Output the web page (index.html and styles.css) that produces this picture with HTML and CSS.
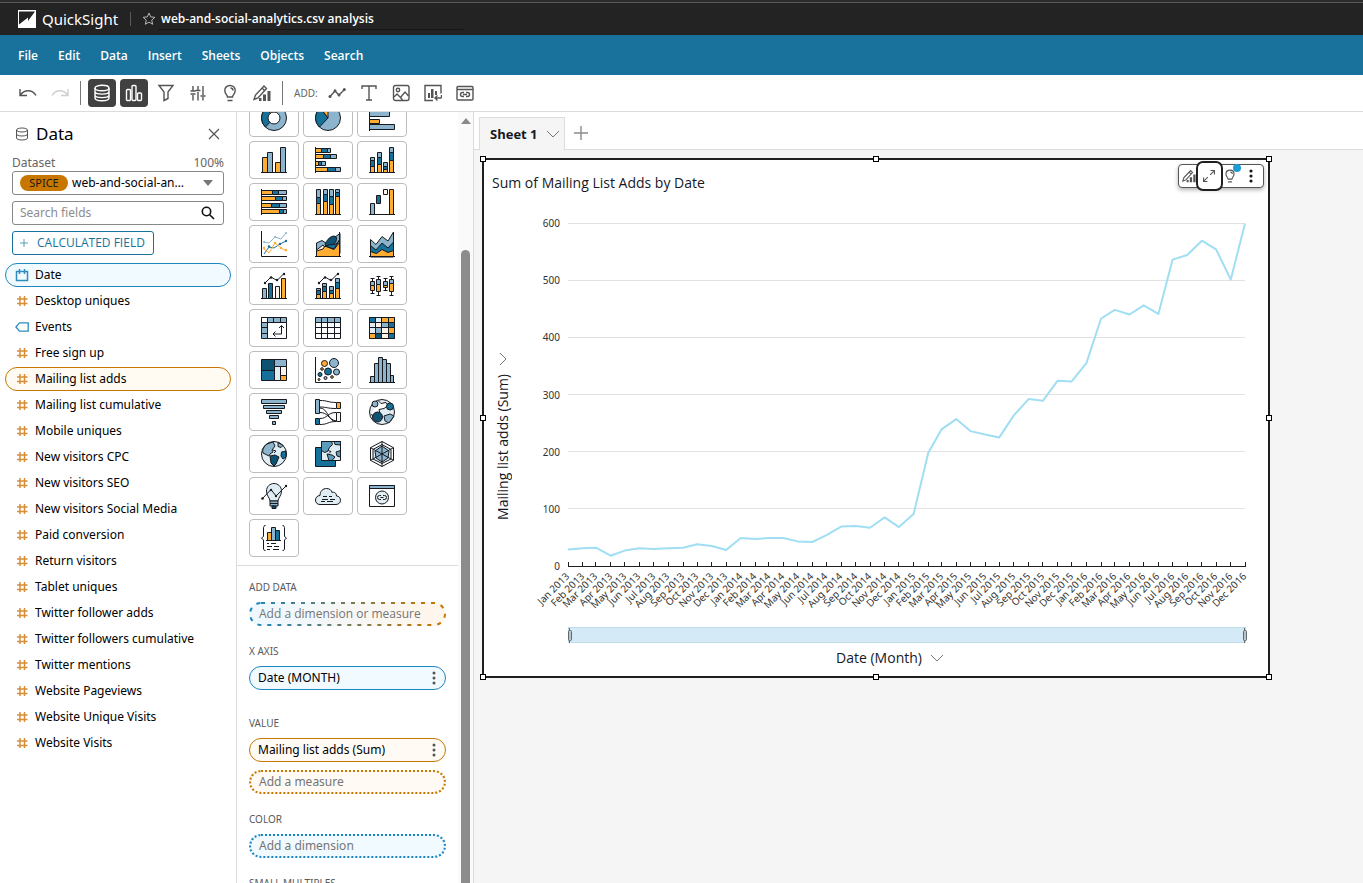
FILE: index.html
```html
<!DOCTYPE html>
<html lang="en">
<head>
<meta charset="utf-8">
<meta name="viewport" content="width=device-width, initial-scale=1">
<title>QuickSight</title>
<link rel="stylesheet" href="styles.css">
</head>
<body>
<header class="topbar">
  <svg class="logo" viewBox="0 0 18 18" aria-hidden="true"><rect width="18" height="18" fill="#fff"/><path d="M1 1.500h16L10 11V7.500L1 14.500z" fill="#232323"/></svg>
  <span class="brand">QuickSight</span>
  <span class="topbar-rule"></span>
  <button class="star" aria-label="Favorite"><svg viewBox="0 0 14 14"><path d="M7 1l1.700 3.900 4.200.4-3.200 2.800 1 4.200L7 10.100l-3.700 2.200 1-4.200L1.100 5.300l4.200-.4z"/></svg></button>
  <input class="analysis-name" type="text" aria-label="Analysis name" value="web-and-social-analytics.csv analysis">
</header>

<nav class="menubar">
  <button>File</button><button>Edit</button><button>Data</button><button>Insert</button><button>Sheets</button><button>Objects</button><button>Search</button>
</nav>

<div class="toolbar" role="toolbar" aria-label="Analysis tools">
  <button class="tool" aria-label="Undo"><svg viewBox="0 0 18 18"><path d="M1 5v6.500h7M1.500 11C5 5.500 13 5 17 11.500"/></svg></button>
  <button class="tool tool-off" aria-label="Redo"><svg viewBox="0 0 18 18"><path d="M17 5v6.500h-7M16.500 11C13 5.500 5 5 1 11.500"/></svg></button>
  <span class="tool-rule"></span>
  <button class="tool tool-on" aria-label="Data"><svg viewBox="0 0 18 18"><ellipse cx="9" cy="4" rx="7" ry="2.700"/><path d="M2 4v10c0 1.600 3 2.700 7 2.700s7-1.100 7-2.700V4M2 7.500c0 1.500 3 2.600 7 2.600s7-1.100 7-2.600M2 11c0 1.500 3 2.600 7 2.600s7-1.100 7-2.600"/></svg></button>
  <button class="tool tool-on" aria-label="Visuals"><svg viewBox="0 0 18 18"><rect x="1.500" y="5.500" width="4" height="11" rx="1"/><rect x="7" y="1.500" width="4" height="15" rx="1"/><rect x="12.500" y="9" width="4" height="7.500" rx="1"/></svg></button>
  <button class="tool" aria-label="Filter"><svg viewBox="0 0 18 18"><path d="M2 1.500h14l-5 6.500v6.500L7 16.500V8z"/></svg></button>
  <button class="tool" aria-label="Parameters"><svg viewBox="0 0 18 18"><path d="M4 2v5M4 11v5.500M9 2v4M9 8v8.500M14 2v9M14 13v3.500M1.500 10h5M1.500 7h5M6.500 6.500h5M11.500 12h5"/></svg></button>
  <button class="tool" aria-label="Insights"><svg viewBox="0 0 18 18"><path d="M6.500 13c0-2-2.700-3.200-2.700-6.500C3.800 3.500 6 1.500 9 1.500s5.200 2 5.200 5c0 3.300-2.700 4.500-2.700 6.500zM6.500 16.500h5M9.500 4c1.500 0 2.500 1 2.500 2.500"/></svg></button>
  <button class="tool" aria-label="Format visual"><svg viewBox="0 0 18 18"><path d="M1 15.500l1.500-4.500L11 2l2.500 2.500L5 14zM9 4l2.500 2.500"/><path class="solid" d="M6 14h2.500v3H6zM10 10.500h3V17h-3zM14.500 7h3v10h-3z"/></svg></button>
  <span class="tool-rule"></span>
  <span class="tool-label">ADD:</span>
  <button class="tool" aria-label="Add visual"><svg viewBox="0 0 18 18"><path d="M2 12.500l5-5.500 4 4 5.500-5.500"/><g class="solid"><circle cx="2" cy="12.500" r="1.500"/><circle cx="7" cy="6.800" r="1.500"/><circle cx="11" cy="11" r="1.500"/><circle cx="16.300" cy="5.500" r="1.500"/></g></svg></button>
  <button class="tool" aria-label="Add text"><svg viewBox="0 0 18 18"><path d="M2 5V2h14v3M9 2v14M6 16h6"/></svg></button>
  <button class="tool" aria-label="Add image"><svg viewBox="0 0 18 18"><rect x="1.500" y="1.500" width="15.500" height="15" rx="2"/><circle cx="6" cy="6" r="1.700"/><path d="M2 13l3-3 3.500 3.500L13 8l3.500 4M8.500 13.500l2 2.500"/></svg></button>
  <button class="tool" aria-label="Add from sheet"><svg viewBox="0 0 18 18"><path d="M9 16.500H1v-15h16v8"/><path class="solid" d="M4 9h2v5H4zM7 5h2.500v9H7zM11 7h2v4h-2z"/><path d="M11 14h6.500M13.500 11.500L11 14l2.500 2.500M17.500 11v3"/></svg></button>
  <button class="tool" aria-label="Add embed"><svg viewBox="0 0 18 18"><rect x="1" y="2.500" width="16" height="13.500" rx="1"/><path d="M1 5.500h16M8 8.500H6.500a2 2 0 000 4H8M10 8.500h1.500a2 2 0 010 4H10M7 10.500h4"/></svg></button>
</div>

<main class="workspace">
  <aside class="data-panel">
    <div class="panel-head">
      <svg class="head-icon" viewBox="0 0 14 14" aria-hidden="true"><ellipse cx="7" cy="3" rx="5.500" ry="2"/><path d="M1.500 3v8c0 1.200 2.400 2 5.500 2s5.500-.8 5.500-2V3M1.500 7c0 1.200 2.400 2 5.500 2s5.500-.8 5.500-2"/></svg>
      <h2>Data</h2>
      <button class="close" aria-label="Close data panel"><svg viewBox="0 0 12 12"><path d="M1 1l10 10M11 1L1 11"/></svg></button>
    </div>
    <div class="dataset-row"><label for="dataset">Dataset</label><span>100%</span></div>
    <div class="box dataset-box">
      <span class="spice">SPICE</span>
      <select id="dataset"><option>web-and-social-analytics.csv</option></select>
      <svg class="caret" viewBox="0 0 10 6" aria-hidden="true"><path d="M0 0h10L5 6z"/></svg>
    </div>
    <div class="box search-box">
      <input type="text" placeholder="Search fields" aria-label="Search fields">
      <svg class="search-icon" viewBox="0 0 14 14" aria-hidden="true"><circle cx="5.500" cy="5.500" r="4.200"/><path d="M8.700 8.700l4.300 4.300"/></svg>
    </div>
    <button class="calc"><svg viewBox="0 0 10 10" aria-hidden="true"><path d="M5 1v8M1 5h8"/></svg>CALCULATED FIELD</button>
    <svg width="0" height="0" class="defs" aria-hidden="true">
      <symbol id="hash" viewBox="0 0 14 14"><path d="M5 2v10M9.500 2v10M2 5h10.500M2 9.500h10.500" fill="none" stroke="#d78e38" stroke-width="1.500"/></symbol>
    </svg>
    <ul class="fields">
      <li class="field field-dim"><svg viewBox="0 0 14 14"><path d="M1.500 3.500h11v9h-11zM4.500 1v5M9.500 1v5" fill="none" stroke="#2e8bc0" stroke-width="1.500"/></svg>Date</li>
      <li class="field"><svg><use href="#hash"/></svg>Desktop uniques</li>
      <li class="field"><svg viewBox="0 0 14 14"><path d="M4.500 2.800h8.700v8.400H4.500L.9 7z" fill="none" stroke="#2e8bc0" stroke-width="1.300"/></svg>Events</li>
      <li class="field"><svg><use href="#hash"/></svg>Free sign up</li>
      <li class="field field-measure"><svg><use href="#hash"/></svg>Mailing list adds</li>
      <li class="field"><svg><use href="#hash"/></svg>Mailing list cumulative</li>
      <li class="field"><svg><use href="#hash"/></svg>Mobile uniques</li>
      <li class="field"><svg><use href="#hash"/></svg>New visitors CPC</li>
      <li class="field"><svg><use href="#hash"/></svg>New visitors SEO</li>
      <li class="field"><svg><use href="#hash"/></svg>New visitors Social Media</li>
      <li class="field"><svg><use href="#hash"/></svg>Paid conversion</li>
      <li class="field"><svg><use href="#hash"/></svg>Return visitors</li>
      <li class="field"><svg><use href="#hash"/></svg>Tablet uniques</li>
      <li class="field"><svg><use href="#hash"/></svg>Twitter follower adds</li>
      <li class="field"><svg><use href="#hash"/></svg>Twitter followers cumulative</li>
      <li class="field"><svg><use href="#hash"/></svg>Twitter mentions</li>
      <li class="field"><svg><use href="#hash"/></svg>Website Pageviews</li>
      <li class="field"><svg><use href="#hash"/></svg>Website Unique Visits</li>
      <li class="field"><svg><use href="#hash"/></svg>Website Visits</li>
    </ul>
  </aside>

  <aside class="visual-panel">
    <div class="visual-scroll">
      <div class="types">
        <button aria-label="Donut chart"><svg viewBox="0 0 26 26"><circle class="l" cx="13" cy="13" r="12.500"/><path class="d" d="M13 13L4.500 22A12.500 12.500 0 015.500 3z"/><path class="o" d="M13 13L5.500 3A12.500 12.500 0 0113 .5z"/><circle class="w" cx="13" cy="13" r="6"/></svg></button>
        <button aria-label="Pie chart"><svg viewBox="0 0 26 26"><circle class="l" cx="13" cy="13" r="12.500"/><path class="d" d="M13 13L4.500 22A12.500 12.500 0 015.500 3z"/><path class="o" d="M13 13L5.500 3A12.500 12.500 0 0113 .5z"/></svg></button>
        <button aria-label="Bar chart"><svg viewBox="0 0 26 26"><path class="l" d="M.5 6.500h20v5H.5zM.5 19.500h25v5H.5z"/><path class="o" d="M.5 1.500h14v4H.5zM.5 14.500h10v4H.5z"/><path class="n0" d="M.5 0v26"/></svg></button>

        <button aria-label="Vertical bar chart"><svg viewBox="0 0 26 26"><path class="o" d="M1.500 10.500h5v15h-5zM14.500 15.500h5v10h-5z"/><path class="l" d="M6.500 5.500h5v20h-5zM19.500.5h5v25h-5z"/><path class="n0" d="M0 25.500h26"/></svg></button>
        <button aria-label="Stacked bar chart"><svg viewBox="0 0 26 26"><path class="o" d="M.5 1.500h6v4h-6zM.5 7.500h8v4h-8zM.5 14.500h3v4h-3zM.5 20.500h12v4H.5z"/><path class="d" d="M6.500 1.500h6v4h-6zM8.500 7.500h7v4h-7zM3.500 14.500h3v4h-3zM12.500 20.500h8v4h-8z"/><path class="l" d="M12.500 1.500h3v4h-3zM15.500 7.500h6v4h-6zM6.500 14.500h4v4h-4zM20.500 20.500h5v4h-5z"/><path class="n0" d="M.5 0v26"/></svg></button>
        <button aria-label="Vertical stacked bar chart"><svg viewBox="0 0 26 26"><path class="o" d="M1.500 19.500h4v6h-4zM8.500 17.500h4v8h-4zM14.500 22.500h4v3h-4zM20.500 13.500h4v12h-4z"/><path class="d" d="M1.500 13.500h4v6h-4zM8.500 10.500h4v7h-4zM14.500 19.500h4v3h-4zM20.500 5.500h4v8h-4z"/><path class="l" d="M1.500 10.500h4v3h-4zM8.500 5.500h4v5h-4zM14.500 15.500h4v4h-4zM20.500.5h4v5h-4z"/><path class="n0" d="M0 25.500h26"/></svg></button>

        <button aria-label="Stacked 100% bar chart"><svg viewBox="0 0 26 26"><path class="o" d="M.5 1.500h11v4H.5zM.5 7.500h14v4H.5zM.5 14.500h10v4H.5zM.5 20.500h18v4H.5z"/><path class="d" d="M11.500 1.500h6v4h-6zM14.500 7.500h7v4h-7zM10.500 14.500h8v4h-8zM18.500 20.500h4v4h-4z"/><path class="l" d="M17.500 1.500h8v4h-8zM21.500 7.500h4v4h-4zM18.500 14.500h7v4h-7zM22.500 20.500h3v4h-3z"/><path class="n0" d="M.5 0v26"/></svg></button>
        <button aria-label="Vertical stacked 100% bar chart"><svg viewBox="0 0 26 26"><path class="o" d="M1.500 14.500h4v11h-4zM8.500 12.500h4v13h-4zM14.500 15.500h4v10h-4zM20.500 7.500h4v18h-4z"/><path class="d" d="M1.500 8.500h4v6h-4zM8.500 5.500h4v7h-4zM14.500 7.500h4v8h-4zM20.500 3.500h4v4h-4z"/><path class="l" d="M1.500.5h4v8h-4zM8.500.5h4v5h-4zM14.500.5h4v7h-4zM20.500.5h4v3h-4z"/><path class="n0" d="M0 25.500h26"/></svg></button>
        <button aria-label="Waterfall chart"><svg viewBox="0 0 26 26"><path class="l" d="M1.500 14.500h4v11h-4z"/><path class="d" d="M7.500 6.500h4v8h-4z"/><path class="p" d="M14.500.5h4v5h-4z"/><path class="o" d="M20.500.5h4v25h-4z"/><path class="n0" d="M0 25.500h26"/></svg></button>

        <button aria-label="Line chart"><svg viewBox="0 0 26 26"><path class="n0" d="M.5 0v25.500H26"/><path class="ln lnl" d="M3 11l5 1 6-6 6 2 5-6"/><path class="ln lnd" d="M3 23l5-7 5 1 6-4 6-3"/><path class="ln lno" d="M3 18l5 4 6-10 6 5 5 3"/><g fill="#8cb4cc"><circle cx="3" cy="11" r="1"/><circle cx="14" cy="6" r="1"/><circle cx="25" cy="2" r="1"/></g><g fill="#16719a"><circle cx="8" cy="15.500" r="1.200"/><circle cx="25" cy="10" r="1.200"/><circle cx="19" cy="13" r="1.200"/></g><g fill="#ffac33"><circle cx="14" cy="12" r="1.300"/><circle cx="25" cy="19" r="1.200"/><circle cx="3" cy="17" r="1.200"/><circle cx="20" cy="17" r="1.200"/></g></svg></button>
        <button aria-label="Area line chart"><svg viewBox="0 0 26 26"><path class="l" d="M1.500 12L7 9.500l6 4 5-6 7-5v20L1.500 24z"/><path class="p" d="M1.500 19L8 14l3 4-3 7H1.500z"/><path class="n" d="M10 13c4-8 9-9 11-7s-1 9-9 12z"/><path class="o" d="M1.500 20L8 18l2-3 9 3.500 5.500-7v14h-23z"/><path class="d" d="M10 15l4-1 7-1 3.500-4-5.500 9z"/><path class="n0" d="M0 25.500h26M24.500 1v24"/></svg></button>
        <button aria-label="Stacked area line chart"><svg viewBox="0 0 26 26"><path class="l" d="M1.500 8.500L7 13.500l6-8 6 4.500 5.500-9v25h-23z"/><path class="d" d="M1.500 14.500L7 19l6-7 6 5 5.500-6v14.500h-23z"/><path class="o" d="M1.500 20.500l6 2 5.500-4 6 3 5.500-2v6h-23z"/><path class="n0" d="M0 25.500h26"/></svg></button>

        <button aria-label="Clustered bar combo chart"><svg viewBox="0 0 26 26"><path class="l" d="M1.500 15.500h4v10h-4z"/><path class="d" d="M7.500 10.500h4v15h-4z"/><path class="p" d="M14.500 13.500h4v12h-4z"/><path class="o" d="M20.500 5.500h4v20h-4z"/><path class="n0" d="M0 25.500h26M4 10l6-6 6 3.500L23 .5"/><g fill="#16191f"><circle cx="4" cy="10" r="1.200"/><circle cx="10" cy="4.500" r="1.200"/><circle cx="16" cy="7" r="1.200"/><circle cx="23" cy="1" r="1.200"/></g></svg></button>
        <button aria-label="Stacked bar combo chart"><svg viewBox="0 0 26 26"><path class="o" d="M1.500 21.500h4v4h-4zM7.500 18.500h4v7h-4zM14.500 20.500h4v5h-4zM20.500 15.500h4v10h-4z"/><path class="d" d="M1.500 17.500h4v4h-4zM7.500 13.500h4v5h-4zM14.500 17.500h4v3h-4zM20.500 9.500h4v6h-4z"/><path class="l" d="M1.500 15.500h4v2h-4zM7.500 10.500h4v3h-4zM14.500 13.500h4v4h-4zM20.500 5.500h4v4h-4z"/><path class="n0" d="M0 25.500h26M4 10l6-6 6 3.500L23 .5"/><g fill="#16191f"><circle cx="4" cy="10" r="1.200"/><circle cx="10" cy="4.500" r="1.200"/><circle cx="16" cy="7" r="1.200"/><circle cx="23" cy="1" r="1.200"/></g></svg></button>
        <button aria-label="Box plot"><svg viewBox="0 0 26 26"><path class="n0" d="M3.500 5v15M9.500 4v18M16.500 5v13M22.500 3v19M1.500 5.500h4M1.500 20.500h4M7.500 3.500h4M7.500 22.500h4M14.500 5.500h4M14.500 17.500h4M20.500 3.500h4M20.500 22.500h4"/><path class="o" d="M1.500 12.500h4v5h-4zM7.500 11.500h4v7h-4zM14.500 12.500h4v2h-4zM20.500 10.500h4v8h-4z"/><path class="l" d="M1.500 8.500h4v4h-4zM7.500 6.500h4v5h-4zM14.500 8.500h4v4h-4zM20.500 6.500h4v4h-4z"/></svg></button>

        <button aria-label="Pivot table"><svg viewBox="0 0 26 26"><path class="l" d="M.5 2.500h25v5H6.500v16h-6z"/><path class="w" d="M.5 2.500h6v5h-6zM6.500 7.500h19v16h-19z"/><path class="n0" d="M.5 12.500h6M.5 18.500h6M12.500 2.500v5M19.500 2.500v5M20.500 11v8h-8.500M18 13l2.500-2.500L23 13M14.500 16.500L12 19l2.500 2.500"/></svg></button>
        <button aria-label="Table"><svg viewBox="0 0 26 26"><path class="w" d="M.5 2.500h25v21H.5z"/><path class="l" d="M.5 2.500h25v5H.5z"/><path class="n0" d="M.5 12.500h25M.5 18.500h25M6.500 2.500v21M12.500 2.500v21M19.500 2.500v21"/></svg></button>
        <button aria-label="Heat map"><svg viewBox="0 0 26 26"><path class="e" d="M.5 2.500h25v21H.5z"/><path class="d" d="M.5 2.500h6v5h-6zM19.500 7.500h6v5h-6zM19.500 18.500h6v5h-6z"/><path class="o" d="M12.500 2.500h13v5h-13zM19.500 12.500h6v6h-6zM.5 18.500h6v5h-6z"/><path class="l" d="M12.500 7.500h7v5h-7zM6.500 12.500h6v6h-6z"/><path class="n" d="M6.500 18.500h6v5h-6z"/><path class="p" d="M6.500 7.500h6v5h-6zM12.500 12.500h7v11h-7z"/><path class="n0" d="M.5 12.500h25M.5 18.500h25M.5 7.500h25M6.500 2.500v21M12.500 2.500v21M19.500 2.500v21"/></svg></button>

        <button aria-label="Tree map"><svg viewBox="0 0 26 26"><path class="n" d="M.5 2.500h13v11H.5z"/><path class="d" d="M.5 13.500h13v10H.5z"/><path class="l" d="M13.500 2.500h12v7h-12z"/><path class="e" d="M13.500 9.500h6v14h-6z"/><path class="p" d="M19.500 9.500h6v9h-6z"/><path class="o" d="M19.500 18.500h6v5h-6z"/></svg></button>
        <button aria-label="Scatter plot"><svg viewBox="0 0 26 26"><path class="n0" d="M.5 0v25.500H26"/><circle class="o" cx="9.500" cy="6.500" r="3"/><circle class="l" cx="19" cy="6" r="4.500"/><circle class="d" cx="13" cy="14.500" r="3.500"/><circle class="l" cx="21.500" cy="15" r="3"/><circle class="d" cx="5" cy="17.500" r="2"/><circle class="l" cx="10.500" cy="21" r="1.500"/><circle class="o" cx="17" cy="20" r="1.300"/><circle class="o" cx="7" cy="12" r="1.300"/><circle class="o" cx="4" cy="22.500" r="1"/></svg></button>
        <button aria-label="Histogram"><svg viewBox="0 0 26 26"><path class="l" d="M1.500 19.500h4v6h-4zM5.500 6.500h4v19h-4zM9.500.5h4v25h-4zM13.500 2.500h4v23h-4zM17.500 6.500h4v19h-4zM21.500 18.500h3v7h-3z"/><path class="n0" d="M0 25.500h26"/></svg></button>

        <button aria-label="Funnel chart"><svg viewBox="0 0 26 26"><path class="l" d="M.5.5h25v4H.5zM2.500 6.500h21v3h-21zM5.500 11.500h15v3h-15zM8.500 16.500h9v3h-9zM11.500 22.500h3v3h-3z"/></svg></button>
        <button aria-label="Sankey diagram"><svg viewBox="0 0 26 26"><path class="n0" d="M5 1.500C13 1.500 13 3.500 21 3.500M5 8C12 8 12 9.500 21 9.500M5 9C13 9 13 22.500 21 22.500M5 13.500C13 13.500 13 20 21 22M5 19.500C13 19.500 12 13.500 21 13.500M5 25.500C13 25.500 13 22.500 21 22.500"/><path class="l" d="M.5.5h4v14h-4z"/><path class="o" d="M21.500 3.500h4v6h-4z"/><path class="p" d="M21.500 13.500h4v9h-4z"/><path class="d" d="M.5 19.500h4v6h-4z"/></svg></button>
        <button aria-label="Points on map"><svg viewBox="0 0 26 26"><circle class="e" cx="13" cy="13" r="12.500"/><path class="w" d="M9 1.500l3 3 5-1 2 3-4 3-5 1 1 4-5 3-4-2"/><path class="l" d="M15 17l6-2 4 2-5 7-4-2z"/><circle class="l" cx="6" cy="5" r="3"/><circle class="d" cx="21" cy="7.500" r="3.500"/><circle class="n" cx="8.500" cy="18" r="5"/></svg></button>

        <button aria-label="Filled globe map"><svg viewBox="0 0 26 26"><circle class="e" cx="13" cy="13" r="12.500"/><path class="l" d="M6 3l6-2 2 4-3 4 1 2-3 2-1 2-6-3C1 9 3 5 6 3z"/><path class="l" d="M17 1.500l5 3-2 2-3-1z"/><path class="n" d="M9 15l5-1 4 2-3 7-2 2-3-3z"/><path class="d" d="M20.500 11l4.500-1v6l-3 2-2-3z"/><path class="n0" d="M12 9l3 1-2 2"/></svg></button>
        <button aria-label="Layer map"><svg viewBox="0 0 26 26"><path class="d" d="M.5 6.500h20v19H.5z"/><path class="e" d="M6.500.5h19v19h-19z"/><path class="dl" d="M6.500.5h10l1 3-3 3-2 4-3 1-3-2zM19 .5h6.500V4L20 3.500zM25.500 9.500L21 11l1 4 3.500 1z"/><path class="dl" d="M12 13l5 1 3 2-3 3.500h-3z"/><path class="n0" d="M13 9.500l3 1-2 2"/></svg></button>
        <button aria-label="Radar chart"><svg viewBox="0 0 26 26"><path class="w" d="M13 .5l11.500 6.200v12.600L13 25.500 1.500 19.300V6.700z"/><path class="e" d="M13 3.500l9 5v9.500l-9 4.500L4 18V8.500z"/><path class="l" d="M13 5l7 5-1 7-6 4-6-4-1-7z"/><path class="n0" d="M13 .5v25M1.500 6.700l23 12.600M24.500 6.700L1.500 19.300"/></svg></button>

        <button aria-label="Insight"><svg viewBox="0 0 26 26"><path class="e" d="M9 18c0-3-3.500-5-3.500-10C5.500 3.500 9 .5 13 .5S20.500 3.500 20.500 8c0 5-3.500 7-3.500 10z"/><path class="l" d="M9 18h8v5H9z"/><path class="n" d="M11 23h4v2.500h-4z"/><path class="n0" d="M9 20.500h8M1.500 15.500l8.500-9 5 6.500L25 3"/><g fill="#16191f"><circle cx="1.500" cy="15.500" r="1.300"/><circle cx="10" cy="7" r="1.200"/><circle cx="15" cy="13" r="1.200"/><circle cx="25" cy="3" r="1.200"/></g></svg></button>
        <button aria-label="Word cloud"><svg viewBox="0 0 26 26"><path class="e" d="M5 21.500C2 21.500.5 19.500.5 17S2.500 12.500 5 12.500C5 8 8 5.500 11.500 5.500c3 0 5 1.500 5.500 4 2-1 4.500.5 4.500 3.500 2.500 0 4 2 4 4.300 0 2.500-2 4.200-4.500 4.200z"/><path class="n0" d="M8 13.500h4M14 13.500h3M7 16.500h6M15 16.500h5M6 18.500h4M12 18.500h6"/></svg></button>
        <button aria-label="Custom visual content"><svg viewBox="0 0 26 26"><path class="w" d="M.5 2.500h25v21H.5z"/><path class="l" d="M.5 2.500h25v3H.5z"/><circle class="e" cx="13" cy="14.500" r="6.500"/><path class="n0" d="M12 12.500h-1.500a2 2 0 000 4H12M14 12.500h1.500a2 2 0 010 4H14M11.500 14.500h3"/></svg></button>

        <button aria-label="Highcharts visual"><svg viewBox="0 0 26 26"><path class="o" d="M6.500 7.500h4v8h-4z"/><path class="l" d="M10.500 2.500h4v13h-4z"/><path class="d" d="M14.500 5.500h4v10h-4z"/><path class="n0" d="M4.500.5h-1l-1 2v9L.5 13l2 2v9l1 1.500h1M21.500.5h1l1 2v9l2 1.500-2 2v9l-1 1.500h-1M5 15.500h15M6 18.500h2M10 18.500h5M6 21.500h5M13 21.500h5M6 24.500h3M12 24.500h6"/></svg></button>
      </div>
      <div class="wells">
        <section class="well">
          <h3>ADD DATA</h3>
          <button class="drop drop-any">
            <svg aria-hidden="true"><defs><linearGradient id="mix"><stop offset="0" stop-color="#1a86c4"/><stop offset=".2" stop-color="#3d8199"/><stop offset=".8" stop-color="#a9771f"/><stop offset="1" stop-color="#c97700"/></linearGradient></defs><rect class="drop-line"/></svg>Add a dimension or measure</button>
        </section>
        <section class="well">
          <h3>X AXIS</h3>
          <div class="pill pill-dim">Date (MONTH)<button class="dots" aria-label="Date menu"><svg viewBox="0 0 4 14"><circle cx="2" cy="2" r="1.500"/><circle cx="2" cy="7" r="1.500"/><circle cx="2" cy="12" r="1.500"/></svg></button></div>
        </section>
        <section class="well">
          <h3>VALUE</h3>
          <div class="pill pill-measure">Mailing list adds (Sum)<button class="dots" aria-label="Mailing list adds menu"><svg viewBox="0 0 4 14"><circle cx="2" cy="2" r="1.500"/><circle cx="2" cy="7" r="1.500"/><circle cx="2" cy="12" r="1.500"/></svg></button></div>
          <button class="drop drop-measure">Add a measure</button>
        </section>
        <section class="well">
          <h3>COLOR</h3>
          <button class="drop drop-dim">Add a dimension</button>
        </section>
        <section class="well">
          <h3>SMALL MULTIPLES</h3>
          <button class="drop drop-dim">Add a dimension</button>
        </section>
      </div>
    </div>
    <div class="scrollbar" aria-hidden="true"><svg viewBox="0 0 10 6"><path d="M0 6l5-6 5 6z"/></svg><span class="thumb"></span></div>
  </aside>

  <section class="stage">
    <div class="tabs">
      <button class="tab">Sheet 1<svg viewBox="0 0 14 8" aria-hidden="true"><path d="M1 1l6 6 6-6"/></svg></button>
      <button class="add-tab" aria-label="Add sheet"><svg viewBox="0 0 14 14"><path d="M7 0v14M0 7h14"/></svg></button>
    </div>
    <div class="canvas">
      <article class="visual">
        <h2>Sum of Mailing List Adds by Date</h2>
        <div class="visual-body">
          <button class="axis-y"><span>Mailing list adds (Sum)</span><svg viewBox="0 0 8 14" aria-hidden="true"><path d="M1 1l6 6-6 6"/></svg></button>
          <svg id="chart" class="chart" viewBox="0 0 744 440" role="img" aria-label="Line chart of mailing list adds by month"></svg>
        </div>
        <button class="axis-x">Date (Month)<svg viewBox="0 0 14 8" aria-hidden="true"><path d="M1 1l6 6 6-6"/></svg></button>
        <div class="visual-tools">
          <button aria-label="Format visual"><svg viewBox="0 0 18 18"><path d="M1 15.500l1.500-4.500L11 2l2.500 2.500L5 14zM9 4l2.500 2.500"/><path class="solid" d="M6 14h2.500v3H6zM10 10.500h3V17h-3zM14.500 7h3v10h-3z"/></svg></button>
          <button class="focused" aria-label="Maximize"><svg viewBox="0 0 18 18"><path d="M10.500 7.500L16 2M11 2h5v5M7.500 10.500L2 16M2 11v5h5"/></svg></button>
          <button class="has-dot" aria-label="Insights"><svg viewBox="0 0 18 18"><path d="M6.500 13c0-2-2.700-3.200-2.700-6.500C3.800 3.500 6 1.500 9 1.500s5.200 2 5.200 5c0 3.300-2.700 4.500-2.700 6.500zM6.500 16.500h5M9.500 4c1.500 0 2.500 1 2.500 2.500"/></svg></button>
          <button class="more" aria-label="Menu options"><svg viewBox="0 0 4 14"><circle cx="2" cy="2" r="1.600"/><circle cx="2" cy="7" r="1.600"/><circle cx="2" cy="12" r="1.600"/></svg></button>
        </div>
        <i class="grip top left"></i><i class="grip top mid"></i><i class="grip top right"></i>
        <i class="grip center left"></i><i class="grip center right"></i>
        <i class="grip bottom left"></i><i class="grip bottom mid"></i><i class="grip bottom right"></i>
      </article>
    </div>
  </section>
</main>
<script src="app.js"></script>
</body>
</html>
```
FILE: styles.css
```css
* { box-sizing: border-box; }
html, body { height: 100%; }
body {
  margin: 0;
  display: flex;
  flex-direction: column;
  overflow: hidden;
  font: 12px/16px "Noto Sans", "Open Sans", sans-serif;
  color: #000;
  background: #fff;
}
button, input, select { font: inherit; color: inherit; }
button { margin: 0; padding: 0; border: 0; background: none; cursor: pointer; }
h2, h3, ul { margin: 0; padding: 0; font-weight: 400; list-style: none; }
svg { display: block; flex: none; }

/* Top bar */
.topbar {
  flex: none;
  display: flex;
  align-items: center;
  height: 35px;
  padding: 0 18px;
  background: #232323;
  border-top: 2px solid #2b2b2b;
  box-shadow: inset 0 1px #585858;
  color: #fff;
}
.logo { width: 18px; height: 18px; }
.brand { margin-left: 6px; font-size: 15px; line-height: 20px; }
.topbar-rule { width: 1px; height: 14px; margin: 0 11px 0 12px; background: #5a5a5a; }
.star svg { width: 14px; height: 14px; fill: none; stroke: #b5b5b5; }
.analysis-name {
  flex: 0 1 304px;
  min-width: 0;
  height: 22px;
  margin-left: 3px;
  padding: 0 2px;
  border: 0;
  border-bottom: 1px solid #161616;
  background: none;
  font-family: "Open Sans", sans-serif;
  font-weight: 600;
}

/* Menu bar */
.menubar {
  flex: none;
  display: flex;
  align-items: center;
  gap: 20px;
  height: 40px;
  padding: 2px 18px 0;
  background: #19729b;
  color: #fff;
  font-family: "Open Sans", sans-serif;
  font-weight: 600;
}

/* Toolbar */
.toolbar {
  flex: none;
  display: flex;
  align-items: center;
  gap: 4px;
  height: 37px;
  padding: 0 14px;
  border-bottom: 1px solid #dcdcdc;
}
.tool { display: grid; place-items: center; width: 28px; height: 28px; border-radius: 4px; color: #545454; }
.tool svg, .visual-tools svg { width: 18px; height: 18px; fill: none; stroke: currentColor; stroke-width: 1.4; }
.tool .solid, .visual-tools .solid { fill: currentColor; stroke: none; }
.tool-off { color: #cfcfcf; }
.tool-on { background: #414141; color: #fff; }
.tool-rule { width: 2px; height: 24px; margin: 0 2px; border-left: 1px solid #777; }
.tool-label { width: 29px; padding-left: 4px; font-size: 10px; color: #666; }

.workspace { flex: 1; display: flex; min-height: 0; }

/* Data panel */
.data-panel { flex: none; width: 237px; padding: 10px 5px; border-right: 1px solid #dcdcdc; overflow: hidden; }
.panel-head { display: flex; align-items: center; height: 24px; margin: 0 10px 9px; }
.panel-head h2 { flex: 1; margin-left: 7px; font-size: 17px; line-height: 24px; }
.head-icon { width: 14px; height: 14px; fill: none; stroke: #555; }
.close svg { width: 12px; height: 12px; stroke: #545454; stroke-width: 1.2; }
.close { margin-right: 1px; }
.dataset-row { display: flex; justify-content: space-between; margin: 0 7px; color: #666; }
.box { display: flex; align-items: center; height: 24px; margin: 0 7px 6px; padding: 0 8px 0 7px; border: 1px solid #888; border-radius: 3px; }
.spice { width: 48px; border-radius: 8px; background: #c77700; color: #1a1a1a; font-size: 11px; text-align: center; }
.box select { flex: 1; min-width: 0; margin: 0 16px 0 4px; padding: 0; border: 0; background: none; appearance: none; overflow: hidden; text-overflow: ellipsis; white-space: nowrap; }
.caret { width: 10px; height: 6px; margin-right: 2px; fill: #777; }
.box input { flex: 1; min-width: 0; padding: 0; border: 0; outline: 0; background: none; }
.box input::placeholder { color: #8c8c8c; opacity: 1; }
.search-icon { width: 14px; height: 14px; fill: none; stroke: #111; stroke-width: 1.6; }
.calc { display: flex; align-items: center; gap: 8px; height: 24px; margin: 0 7px 8px; padding: 0 8px 0 6px; border: 1px solid #19729b; border-radius: 3px; color: #19729b; font: 12px/16px "Open Sans", sans-serif; }
.calc svg { width: 10px; height: 10px; stroke: #5c9cba; }
.defs { position: absolute; }
.field { display: flex; align-items: center; gap: 6px; height: 24px; margin: 0 0 2px; padding: 0 9px; border: 1px solid transparent; border-radius: 12px; white-space: nowrap; }
.field svg { width: 14px; height: 14px; }
.field-dim { border-color: #1f86bd; background: #f1faff; }
.field-measure { border-color: #c77700; background: #fffaf2; }

/* Visual types and field wells */
.visual-panel { flex: none; display: flex; width: 237px; border-right: 1px solid #dcdcdc; }
.visual-scroll { flex: none; width: 221px; overflow: hidden; }
.types { display: grid; grid-template-columns: repeat(3, 50px); gap: 4px; margin: 20px 0 0; padding: 0 12px 8px; border-bottom: 1px solid #dcdcdc; }
.types button { display: grid; place-items: center; height: 38px; border: 1px solid #bdbdbd; border-radius: 4px; }
.types svg { width: 26px; height: 26px; overflow: visible; fill: none; stroke: #16191f; stroke-width: 1; }
.l { fill: #8cb4cc; }
.d { fill: #16719a; }
.dl { fill: #5b9bbb; }
.n { fill: #0f5272; }
.o { fill: #ffac33; }
.p { fill: #fff2e6; }
.e { fill: #e0edf2; }
.w { fill: #fff; }
.types .ln { stroke-width: 1; }
.lnl { stroke: #8cb4cc; }
.lnd { stroke: #16719a; }
.lno { stroke: #ffac33; }
.types g { stroke: none; }
.wells { padding: 13px 12px 0; }
.well { padding-bottom: 17px; }
.well h3 { margin-bottom: 7px; font-size: 10px; line-height: 16px; color: #5a5a5a; }
.pill, .drop { display: flex; align-items: center; width: 100%; height: 24px; padding: 0 8px; border-radius: 12px; text-align: left; }
.pill { justify-content: space-between; margin-bottom: 8px; border: 1px solid; }
.pill-dim { border-color: #1a86c4; background: #f1faff; }
.pill-measure { border-color: #c77700; background: #fffbf4; }
.dots svg { width: 4px; height: 14px; margin-right: 1px; fill: #545454; }
.drop { border: 2px dotted; color: #757575; }
.drop-dim { border-color: #1a86c4; background: #f1faff; }
.drop-measure { border-color: #c77700; background: #fffbf4; }
.drop-any { position: relative; padding: 0 10px; border: 0; background: linear-gradient(90deg, #eef8ff, #fff6ec) content-box, linear-gradient(90deg, #eef8ff, #fff6ec); font-family: "Open Sans", sans-serif; }
.drop-any svg { position: absolute; inset: 0; width: 100%; height: 100%; }
.drop-line { x: 1px; y: 1px; width: calc(100% - 2px); height: 22px; rx: 11px; fill: none; stroke: url(#mix); stroke-width: 2; stroke-dasharray: 4 6; }
.scrollbar { flex: 1; display: flex; flex-direction: column; align-items: center; padding-top: 6px; background: #fafafa; }
.scrollbar svg { width: 10px; height: 6px; fill: #8a8a8a; }
.thumb { flex: 1; width: 9px; margin-top: 126px; border-radius: 5px 5px 0 0; background: #8c8c8c; }

/* Sheet */
.stage { flex: 1; min-width: 0; display: flex; flex-direction: column; background: #f5f5f5; }
.tabs { flex: none; display: flex; height: 38px; padding: 5px 5px 0; background: #fff; border-bottom: 1px solid #dcdcdc; }
.tab { display: flex; align-items: center; gap: 8px; height: 33px; padding: 0 4px 0 10px; border: 1px solid #dcdcdc; border-bottom: 0; background: #f5f5f5; font: 700 13px/16px "Open Sans", sans-serif; color: #16191f; }
.tab svg, .axis-x svg { width: 14px; height: 8px; fill: none; stroke: #777; }
.add-tab { margin: 0 9px; }
.add-tab svg { width: 14px; height: 14px; stroke: #8a8a8a; stroke-width: 1.4; }
.canvas { padding: 8px 93px 8px 8px; }
.visual { position: relative; padding: 13px 0 8px; border: 2px solid #1f1f1f; background: #fff; }
.visual h2, .axis-y, .axis-x { font-family: "Open Sans", sans-serif; font-size: 14px; line-height: 20px; color: #16191f; }
.visual h2 { margin: 0 8px 12px; }
.visual-body { display: flex; }
.axis-y { flex: none; display: flex; flex-direction: row-reverse; align-items: center; justify-content: center; gap: 8px; width: 38px; margin-right: 2px; padding-top: 22px; writing-mode: vertical-rl; }
.axis-y span { transform: rotate(180deg); }
.axis-y svg { width: 8px; height: 14px; fill: none; stroke: #777; }
.chart { flex: 1; min-width: 0; height: auto; }
.axis-x { display: flex; align-items: center; gap: 8px; margin: 3px auto 0; padding-left: 28px; }
.grid-line { stroke: #e2e2e2; }
.axis-line { stroke: #1f1f1f; fill: none; }
.series { fill: none; stroke: #a0def3; stroke-width: 2; stroke-linejoin: round; }
.tick-text { font-size: 10px; fill: #333; text-anchor: end; }
.range { fill: #d4ebf7; stroke: #bfdcea; }
.range-grip { fill: #b9c5cb; stroke: #60696e; }
.visual-tools { position: absolute; top: 4px; right: 4px; display: flex; align-items: center; width: 86px; height: 24px; border: 1px solid #555; border-radius: 4px; background: #fff; box-shadow: 0 2px 4px rgba(0, 0, 0, .3); color: #545454; }
.visual-tools button { position: relative; display: grid; place-items: center; width: 20px; height: 22px; }
.visual-tools svg { width: 14px; height: 14px; }
.visual-tools .focused { width: 27px; height: 30px; margin: 0 -3px; z-index: 1; flex: none; border: 2px solid #1f1f1f; border-radius: 7px; background: #fff; }
.visual-tools .has-dot::after { content: ""; position: absolute; top: -1px; right: -2px; width: 8px; height: 8px; border-radius: 50%; background: #1f9cd8; }
.visual-tools .more { width: 24px; }
.visual-tools .more svg { width: 4px; fill: #16191f; stroke: none; }
.grip { position: absolute; width: 6px; height: 6px; border: 1px solid #000; background: #fff; }
.top { top: -4px; }
.bottom { bottom: -4px; }
.center { top: calc(50% - 3px); }
.left { left: -4px; }
.right { right: -4px; }
.mid { left: calc(50% - 3px); }
```
FILE: app.js
```javascript
const values = [
  29, 31, 32, 18, 27, 31, 30, 31, 32, 38, 35, 28,
  49, 47, 49, 49, 43, 42, 54, 69, 70, 67, 85, 68,
  91, 198, 239, 257, 236, 230, 225, 264, 292, 289, 324, 323,
  355, 433, 448, 440, 456, 441, 536, 544, 569, 554, 501, 599
];
const months = ["Jan", "Feb", "Mar", "Apr", "May", "Jun", "Jul", "Aug", "Sep", "Oct", "Nov", "Dec"];
const plot = { left: 44, right: 721, top: 18, bottom: 361 };
const chart = document.getElementById("chart");

function add(tag, attrs, text) {
  const el = document.createElementNS("http://www.w3.org/2000/svg", tag);
  for (const key in attrs) el.setAttribute(key, attrs[key]);
  if (text !== undefined) el.textContent = text;
  chart.appendChild(el);
}

const start = Date.UTC(2013, 0, 1);
const end = Date.UTC(2016, 11, 1);
const x = i => plot.left + (plot.right - plot.left) * (Date.UTC(2013, i, 1) - start) / (end - start);
const y = v => plot.bottom - (plot.bottom - plot.top) * v / 600;
const crisp = n => Math.floor(n) + 0.5;

for (let v = 0; v <= 600; v += 100) {
  if (v) add("line", { class: "grid-line", x1: plot.left, x2: plot.right, y1: crisp(y(v)), y2: crisp(y(v)) });
  add("text", { class: "tick-text", x: 36, y: Math.round(y(v)) + 4 }, v);
}

add("path", { class: "series", d: "M" + values.map((v, i) => x(i).toFixed(1) + " " + y(v).toFixed(1)).join("L") });
add("line", { class: "axis-line", x1: plot.left, x2: plot.right + 1, y1: crisp(plot.bottom), y2: crisp(plot.bottom) });

values.forEach((v, i) => {
  const tx = crisp(x(i));
  add("line", { class: "axis-line", x1: tx, x2: tx, y1: plot.bottom - 4, y2: plot.bottom });
  add("text", { class: "tick-text", transform: `translate(${Math.round(x(i)) + 2} 372) rotate(-45)` },
    months[i % 12] + " " + (2013 + Math.floor(i / 12)));
});

add("rect", { class: "range", x: plot.left + 0.5, y: 422.5, width: plot.right - plot.left, height: 15 });
for (const gx of [plot.left, plot.right - 2]) {
  add("line", { class: "range-grip", x1: gx + 1.5, x2: gx + 1.5, y1: 423, y2: 438 });
  add("rect", { class: "range-grip", x: gx + 0.5, y: 425.5, width: 3, height: 10, rx: 1 });
}

/* Opens the type list with its first row partly scrolled away. */
document.querySelector(".visual-scroll").scrollTop = 33;
```
